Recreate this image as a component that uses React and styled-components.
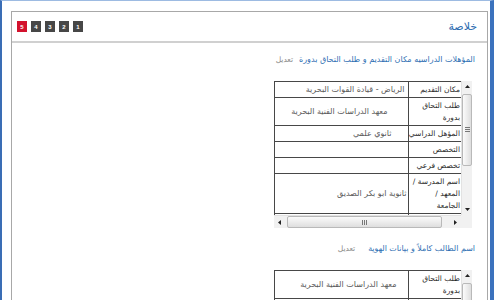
import React from "react";
import styled, { createGlobalStyle } from "styled-components";

const Global = createGlobalStyle`
  html, body { margin: 0; padding: 0; background: #fff; }
  body { font-family: "DejaVu Sans", "Noto Sans", sans-serif; }
`;

const Frame = styled.div`
  box-sizing: border-box;
  width: 494px;
  height: 300px;
  border-left: 2px solid #3a6db5;
  border-top: 1px solid #9dbbe2;
  border-right: 4px solid #3b72bd;
  padding: 10px 2px 0 9px;
  display: flex;
  flex-direction: column;
  overflow: hidden;
  background: #fff;
`;

const Panel = styled.div`
  flex: 1;
  border: 1px solid #a8a8a8;
  border-bottom: none;
  display: flex;
  flex-direction: column;
  min-height: 0;
`;

const Header = styled.div`
  height: 29px;
  border-bottom: 2px solid #d0d0d0;
  display: flex;
  align-items: center;
  justify-content: space-between;
  padding: 0 10px 0 5px;
`;

const Steps = styled.div`
  display: flex;
  gap: 4px;
`;

const Step = styled.span`
  width: 10px;
  height: 11px;
  display: flex;
  align-items: center;
  justify-content: center;
  background: ${(p) => (p.$active ? "#d3122d" : "#474747")};
  color: #fff;
  font-family: "Liberation Sans", sans-serif;
  font-size: 6px;
  font-weight: bold;
`;

const Title = styled.div`
  color: #2d6cb0;
  font-size: 11px;
  direction: rtl;
`;

const Body = styled.div`
  direction: rtl;
  padding: 9px 12px 0;
  flex: 1;
  min-height: 0;
  overflow: hidden;
`;

const SectionHead = styled.div`
  display: flex;
  align-items: center;
  height: 14px;
  gap: ${(p) => p.$gap || 8}px;
`;

const SectionTitle = styled.span`
  color: #2f6fb3;
  font-size: ${(p) => p.$size || 8}px;
`;

const Edit = styled.span`
  color: #8a8a8a;
  font-size: 7.5px;
`;

const Box = styled.div`
  direction: ltr;
  display: grid;
  grid-template-columns: 187px 11px;
  grid-template-rows: 134px 13px;
  width: 198px;
  margin: 15px 3px 13px 0;
`;

const Viewport = styled.div`
  overflow: hidden;
  direction: rtl;
`;

const Table = styled.table`
  width: 187px;
  border-collapse: collapse;
  table-layout: fixed;
`;

const Cell = styled.td`
  border: 1px solid #474747;
  padding: 1.5px 2px 1.5px ${(p) => (p.$label ? "0" : "2px")};
  padding-right: ${(p) => (p.$inset != null ? p.$inset : 1)}px;
  line-height: 12px;
  font-size: ${(p) => (p.$label ? "7.5px" : "8px")};
  vertical-align: middle;
  text-align: right;
  color: ${(p) => (p.$label ? "#2a2a2a" : "#595959")};
  word-wrap: break-word;
  &:first-child { border-right: none; }
`;

const Line = styled.span`
  display: block;
`;

const VScroll = styled.div`
  background: #f1f1f1;
  border-left: 1px solid #e2e2e2;
  display: flex;
  flex-direction: column;
`;

const HScroll = styled.div`
  background: #f1f1f1;
  border-top: 1px solid #e2e2e2;
  display: flex;
  align-items: stretch;
`;

const Corner = styled.div`
  background: #f1f1f1;
`;

const Arrow = styled.div`
  flex: 0 0 11px;
  width: ${(p) => (p.$h ? "11px" : "auto")};
  height: ${(p) => (p.$h ? "auto" : "11px")};
  display: flex;
  align-items: center;
  justify-content: center;
`;

const Track = styled.div`
  flex: 1;
  display: flex;
  flex-direction: ${(p) => (p.$h ? "row" : "column")};
  padding: ${(p) => (p.$h ? "0 2px" : "2px 0")};
`;

const Thumb = styled.div`
  box-sizing: border-box;
  ${(p) =>
    p.$h
      ? `width: ${p.$size}px; height: 100%; background: linear-gradient(#fbfbfb, #dedede);`
      : `height: ${p.$size}px; width: 100%; background: linear-gradient(90deg, #fbfbfb, #dedede);`}
  border: 1px solid #b9b9b9;
  border-radius: 2px;
  display: flex;
  align-items: center;
  justify-content: center;
`;

const Tri = ({ dir }) => {
  const pts = {
    up: "0,3 2.5,0 5,3",
    down: "0,0 2.5,3 5,0",
    left: "3,0 0,2.5 3,5",
    right: "0,0 3,2.5 0,5",
  }[dir];
  const vertical = dir === "up" || dir === "down";
  return (
    <svg width={vertical ? 5 : 3} height={vertical ? 3 : 5}>
      <polygon points={pts} fill="#222" />
    </svg>
  );
};

const Grip = ({ h }) =>
  h ? (
    <svg width="6" height="5">
      <path d="M0.5 0v5M2.5 0v5M4.5 0v5" stroke="#777" strokeWidth="1" />
    </svg>
  ) : (
    <svg width="5" height="6">
      <path d="M0 0.5h5M0 2.5h5M0 4.5h5" stroke="#777" strokeWidth="1" />
    </svg>
  );

const Label = ({ text }) =>
  Array.isArray(text) ? text.map((t, i) => <Line key={i}>{t}</Line>) : text;

const ScrollBox = ({ rows }) => (
  <Box>
    <Viewport>
      <Table>
        <colgroup>
          <col style={{ width: 53 }} />
          <col style={{ width: 134 }} />
        </colgroup>
        <tbody>
          {rows.map((r, i) => (
            <tr key={i}>
              <Cell $label>
                <Label text={r.label} />
              </Cell>
              <Cell $inset={r.inset}>{r.value}</Cell>
            </tr>
          ))}
        </tbody>
      </Table>
    </Viewport>
    <VScroll>
      <Arrow>
        <Tri dir="up" />
      </Arrow>
      <Track>
        <Thumb $size={72}>
          <Grip />
        </Thumb>
      </Track>
      <Arrow>
        <Tri dir="down" />
      </Arrow>
    </VScroll>
    <HScroll>
      <Arrow $h>
        <Tri dir="left" />
      </Arrow>
      <Track $h>
        <Thumb $h $size={155}>
          <Grip h />
        </Thumb>
      </Track>
      <Arrow $h>
        <Tri dir="right" />
      </Arrow>
    </HScroll>
    <Corner />
  </Box>
);

const rows1 = [
  { label: "مكان التقديم", value: "الرياض - قيادة القوات البحرية", inset: 3 },
  { label: "طلب التحاق بدورة", value: "معهد الدراسات الفنية البحرية", inset: 20 },
  { label: "المؤهل الدراسي", value: "ثانوي علمي", inset: 16 },
  { label: "التخصص", value: "" },
  { label: "تخصص فرعي", value: "" },
  { label: ["اسم المدرسة /", "المعهد /", "الجامعة"], value: "ثانوية ابو بكر الصديق", inset: 1 },
  { label: "تاريخ التخرج", value: "1430" },
];

const rows2 = [
  { label: "طلب التحاق بدورة", value: "معهد الدراسات الفنية البحرية", inset: 11 },
  { label: "الاسم الأول", value: "محمد" },
  { label: "اسم الأب", value: "عبدالله" },
  { label: "اسم الجد", value: "سعد" },
  { label: "العائلة", value: "الشهري" },
];

export default function App() {
  return (
    <>
      <Global />
      <Frame>
        <Panel>
          <Header>
            <Steps>
              {[5, 4, 3, 2, 1].map((n) => (
                <Step key={n} $active={n === 5}>
                  {n}
                </Step>
              ))}
            </Steps>
            <Title>خلاصة</Title>
          </Header>
          <Body>
            <SectionHead $gap={6}>
              <SectionTitle $size={8}>المؤهلات الدراسيه مكان التقديم و طلب التحاق بدورة</SectionTitle>
              <Edit>تعديل</Edit>
            </SectionHead>
            <ScrollBox rows={rows1} />
            <SectionHead $gap={13}>
              <SectionTitle $size={7.9}>اسم الطالب كاملاً و بيانات الهوية</SectionTitle>
              <Edit>تعديل</Edit>
            </SectionHead>
            <ScrollBox rows={rows2} />
          </Body>
        </Panel>
      </Frame>
    </>
  );
}
